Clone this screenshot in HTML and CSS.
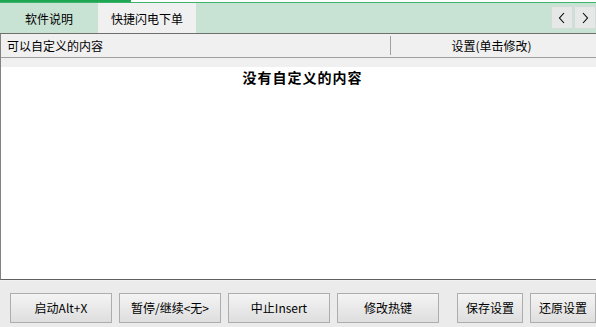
FILE: index.html
```html
<!DOCTYPE html>
<html lang="zh-CN">
<head>
<meta charset="utf-8">
<title>快捷闪电下单</title>
<link rel="stylesheet" href="styles.css">
</head>
<body>
<div class="app">
  <div class="topline"><div class="progress"></div></div>
  <div class="tabbar">
    <div class="tab">软件说明</div>
    <div class="tab active">快捷闪电下单</div>
    <div class="arrows">
      <div class="arrow"><svg width="8" height="12" viewBox="0 0 8 12"><path d="M6 1 L1.5 6 L6 11" fill="none" stroke="#000" stroke-width="1.1"/></svg></div>
      <div class="arrow"><svg width="8" height="12" viewBox="0 0 8 12"><path d="M2 1 L6.5 6 L2 11" fill="none" stroke="#000" stroke-width="1.1"/></svg></div>
    </div>
  </div>
  <div class="panel">
    <div class="header">
      <div class="col1">可以自定义的内容</div>
      <div class="col2">设置(单击修改)</div>
    </div>
    <div class="strip"></div>
    <div class="message">没有自定义的内容</div>
  </div>
  <div class="footer">
    <div class="group">
      <button class="btn wide">启动Alt+X</button>
      <button class="btn wide">暂停/继续&lt;无&gt;</button>
      <button class="btn wide">中止Insert</button>
      <button class="btn wide">修改热键</button>
    </div>
    <div class="group right">
      <button class="btn narrow">保存设置</button>
      <button class="btn narrow">还原设置</button>
    </div>
  </div>
</div>
</body>
</html>
```
FILE: styles.css
```css
html, body {
  margin: 0;
  padding: 0;
}
body {
  width: 596px;
  height: 327px;
  overflow: hidden;
  font-family: "Noto Sans CJK SC", "Noto Sans", sans-serif;
  font-size: 12px;
  color: #000;
  background: #ebebeb;
}
.app {
  display: flex;
  flex-direction: column;
  height: 327px;
}
.topline {
  height: 2px;
  background: #ffffff;
  border-bottom: 1px solid #3db36b;
  display: flex;
}
.progress {
  width: 131px;
  height: 2px;
  background: #1fa652;
}
.tabbar {
  height: 30px;
  background: #c8e3d3;
  border-bottom: 1px solid #6e6e6e;
  display: flex;
  align-items: stretch;
}
.tab {
  width: 98px;
  display: flex;
  align-items: center;
  justify-content: center;
  line-height: 1;
  padding-top: 1px;
  box-sizing: border-box;
}
.tab.active {
  background: #f0f0f0;
}
.arrows {
  margin-left: auto;
  display: flex;
  gap: 1px;
  padding-top: 3px;
}
.arrow {
  width: 22px;
  height: 23px;
  box-sizing: border-box;
  background: #e6e8e7;
  border: 1px solid #d3dcd7;
  display: flex;
  align-items: center;
  justify-content: center;
}
.panel {
  height: 245px;
  background: #ffffff;
  border-left: 1px solid #828282;
  border-bottom: 1px solid #5f5f5f;
  display: flex;
  flex-direction: column;
}
.header {
  height: 23px;
  background: #f0f0f0;
  border-bottom: 1px solid #a0a0a0;
  display: flex;
  align-items: center;
}
.col1 {
  width: 389px;
  padding-left: 6px;
  box-sizing: border-box;
  height: 100%;
  display: flex;
  align-items: center;
}
.col2 {
  flex: 1;
  height: 19px;
  border-left: 1px solid #a0a0a0;
  display: flex;
  align-items: center;
  justify-content: center;
  padding-right: 4px;
}
.strip {
  height: 9px;
  background: #f0f0f0;
}
.message {
  text-align: center;
  font-weight: bold;
  font-size: 14px;
  letter-spacing: 1px;
  line-height: 16px;
  padding-top: 2px;
  padding-left: 8px;
}
.footer {
  flex: 1;
  display: flex;
  align-items: flex-start;
  padding-top: 12px;
  padding-left: 10px;
  border-top: 1px solid #f2f2f2;
}
.group {
  display: flex;
  gap: 7px;
}
.group.right {
  margin-left: 18px;
  gap: 7px;
}
.btn {
  height: 30px;
  box-sizing: border-box;
  border: 1px solid #adadad;
  background: linear-gradient(#f4f4f4, #dedede);
  font-family: "Noto Sans CJK SC", "Noto Sans", sans-serif;
  font-size: 12px;
  color: #000;
  padding: 0;
  margin: 0;
  line-height: 1;
}
.btn.wide {
  width: 102px;
}
.btn.narrow {
  width: 66px;
}
```
